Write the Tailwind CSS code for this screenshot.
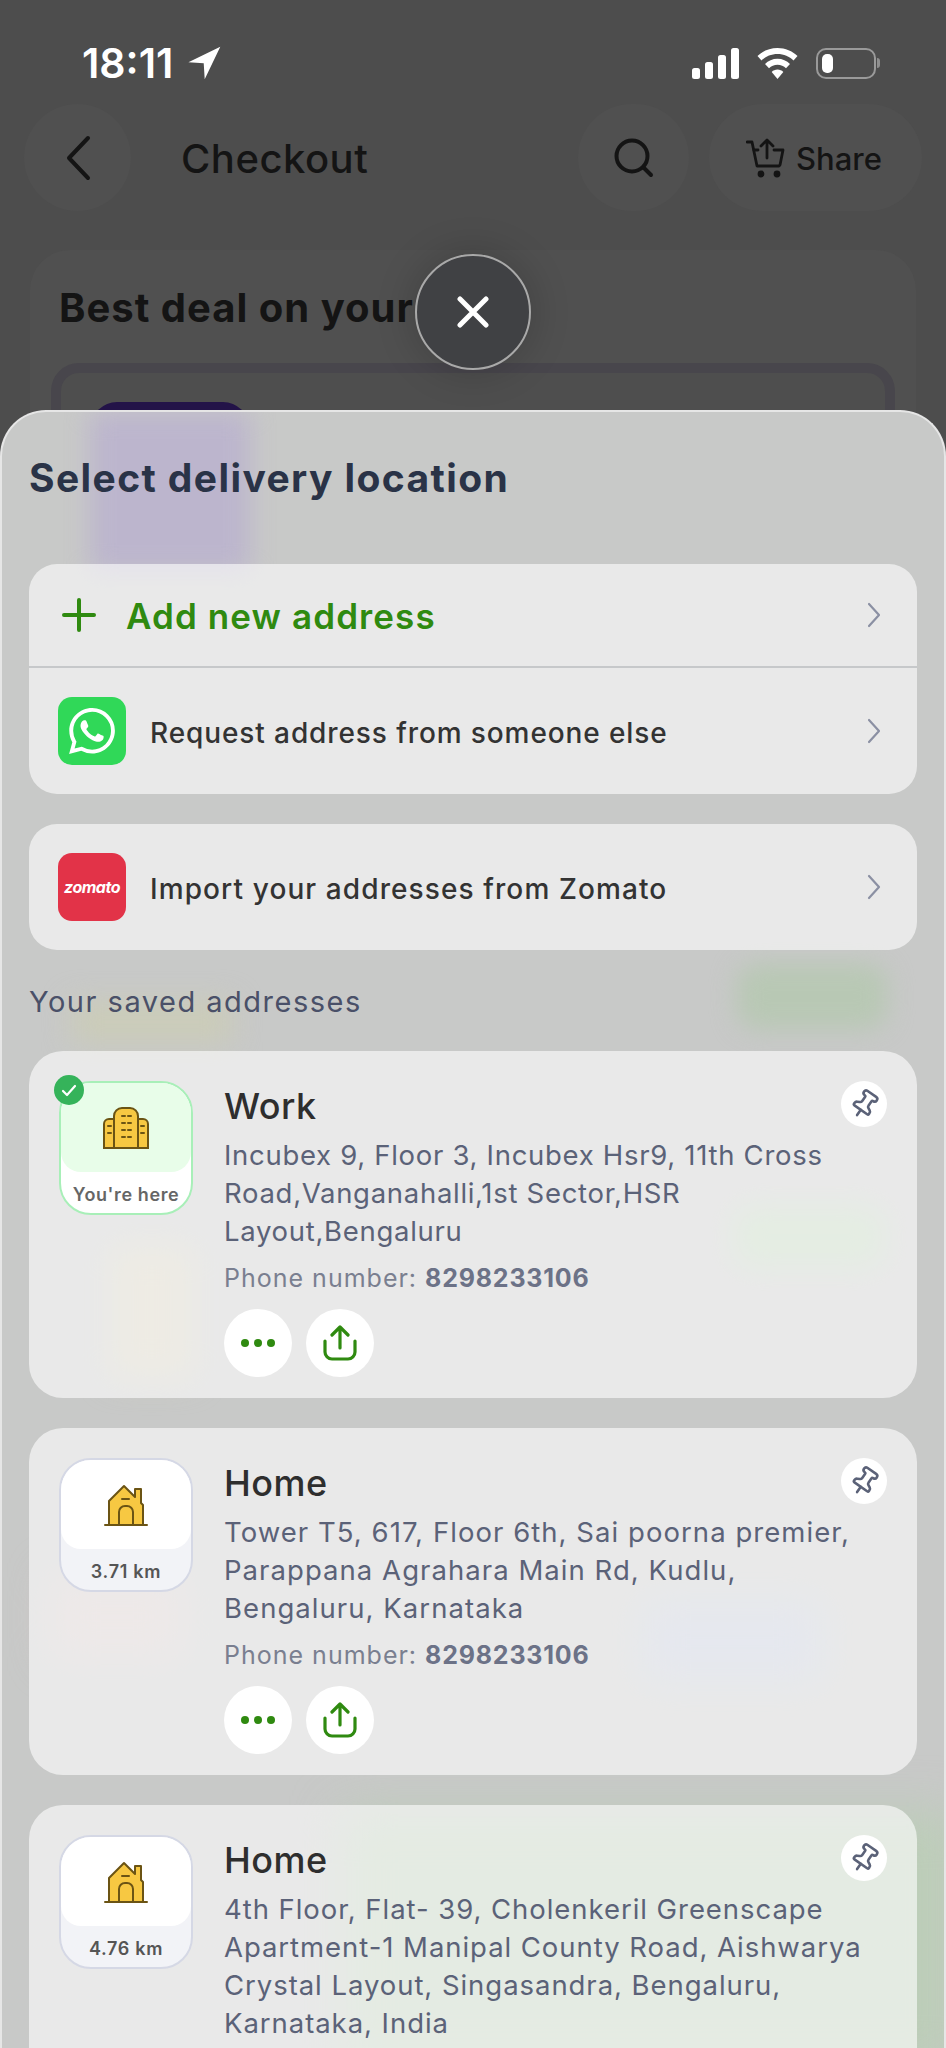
<!DOCTYPE html>
<html lang="en">
<head>
    <meta charset="UTF-8">
    <meta name="viewport" content="width=device-width, initial-scale=1.0">
    <title>Select delivery location</title>
    <script src="https://cdn.jsdelivr.net/npm/@tailwindcss/browser@4"></script>
</head>
<body class="bg-[#4d4d4d] font-['Inter',sans-serif]">
<div class="relative w-[946px] h-[2048px] overflow-hidden bg-[#4d4d4d]">

    <!-- status bar -->
    <div class="h-[104px] pl-[82px] pr-[66px] pt-[41px] flex items-start justify-between text-white">
        <div class="flex items-center gap-[14px] h-[44px]">
            <span class="text-[41px] leading-[44px] font-semibold tracking-[0px]">18:11</span>
            <svg class="w-[34px] h-[34px]" viewBox="0 0 24 24" fill="#fff"><path d="M23.500.5 1 11.500l10.800.7.7 11.300z"/></svg>
        </div>
        <div class="flex items-center gap-[18px] h-[44px]">
            <svg class="w-[47px] h-[31px]" viewBox="0 0 47 31" fill="#fff"><rect x="0" y="20" width="8" height="11" rx="2.5"/><rect x="13" y="14" width="8" height="17" rx="2.5"/><rect x="26" y="7" width="8" height="24" rx="2.5"/><rect x="39" y="0" width="8" height="31" rx="2.5"/></svg>
            <svg class="w-[41px] h-[31px]" viewBox="0 0 41 31" fill="#fff"><path d="M20.5 0C12.6 0 5.6 3.1.5 8.1l4 4.3c4-4 9.700-6.500 16-6.500s12 2.500 16 6.500l4-4.300C35.400 3.100 28.400 0 20.500 0z"/><path d="M20.500 10.800c-4.900 0-9.300 2-12.500 5.100l4 4.300c2.200-2.100 5.200-3.500 8.500-3.500s6.300 1.400 8.500 3.500l4-4.300c-3.200-3.100-7.600-5.100-12.500-5.100z"/><path d="M20.500 21.600c-2.300 0-4.300.9-5.800 2.300l5.800 7.100 5.800-7.100c-1.500-1.400-3.500-2.300-5.800-2.300z"/></svg>
            <div class="flex items-center gap-[1px]">
                <div class="w-[60px] h-[31px] rounded-[10px] border-2 border-[#9a9a9a] p-[4px]">
                    <div class="w-[11px] h-full rounded-[5px] bg-white"></div>
                </div>
                <div class="w-[3px] h-[10px] rounded-r-full bg-[#8f8f8f]"></div>
            </div>
        </div>
    </div>

    <!-- page header behind the sheet -->
    <div class="h-[107px] pl-[24px] pr-[24px] flex items-center">
        <div class="w-[107px] h-[107px] rounded-full bg-[#505050] flex items-center justify-center">
            <svg class="w-[28px] h-[48px]" viewBox="0 0 28 48" fill="none" stroke="#141414" stroke-width="4" stroke-linecap="round" stroke-linejoin="round"><path d="M24 4 5 24l19 20"/></svg>
        </div>
        <h1 class="ml-[50px] flex-1 pt-[3px] text-[40px] tracking-[0.5px] font-medium text-[#141414]">Checkout</h1>
        <div class="w-[111px] h-[107px] rounded-full bg-[#505050] flex items-center justify-center">
            <svg class="w-[40px] h-[40px]" viewBox="0 0 40 40" fill="none" stroke="#141414" stroke-width="4" stroke-linecap="round"><circle cx="18" cy="18" r="15.500"/><path d="m30 30 7 7"/></svg>
        </div>
        <div class="ml-[20px] w-[213px] h-[107px] rounded-full bg-[#505050] flex items-center pl-[37px] gap-[10px]">
            <svg class="w-[40px] h-[40px]" viewBox="0 0 40 40" fill="none" stroke="#141414" stroke-width="2.800" stroke-linecap="round" stroke-linejoin="round"><path d="M1 4h5l5 24h22"/><path d="M8 12h4M28 12h9l-3 15"/><path d="M21 20V3M15 8l6-6 6 6"/><circle cx="15" cy="36" r="2" fill="#141414"/><circle cx="31" cy="36" r="2" fill="#141414"/></svg>
            <span class="pt-[3px] text-[31px] font-medium text-[#141414]">Share</span>
        </div>
    </div>

    <!-- best deal card, mostly covered -->
    <div class="mt-[39px] mx-[30px] h-[400px] rounded-[40px] bg-[#505050] pt-[34px] px-[29px]">
        <p class="text-[40px] leading-[48px] tracking-[1px] font-bold text-[#141414]">Best deal on your</p>
        <div class="mt-[31px] h-[300px] rounded-[28px] border-[10px] border-[#48464c] bg-[#4e4e4e] -mx-[8px] pt-[29px] pl-[30px]">
            <div class="w-[158px] h-[170px] rounded-[26px] bg-[#231348]"></div>
        </div>
    </div>

    <!-- bottom sheet -->
    <div class="absolute inset-x-0 top-[410px] bottom-0 overflow-hidden rounded-t-[46px] bg-[#c8c9c8] border-t-2 border-x-2 border-[#e6e6e6]">

        <!-- blurred page showing through -->
        <div class="absolute left-[88px] top-[0px] w-[160px] h-[160px] bg-[#bcb5cd] blur-[12px]"></div>
        <div class="absolute left-[735px] top-[552px] w-[150px] h-[65px] rounded-[20px] bg-[#b8c8b4] blur-[12px]"></div>
        <div class="absolute left-[732px] top-[795px] w-[150px] h-[60px] rounded-[20px] bg-[#bcd2b8] blur-[14px]"></div>
        <div class="absolute left-[110px] top-[835px] w-[80px] h-[130px] bg-[#d4cebb] blur-[16px]"></div>
        <div class="absolute left-[70px] top-[590px] w-[160px] h-[40px] bg-[#cbccb8] blur-[14px]"></div>
        <div class="absolute left-[50px] top-[1165px] w-[130px] h-[80px] bg-[#d4c8c6] blur-[20px]"></div>
        <div class="absolute left-[640px] top-[1190px] w-[180px] h-[80px] bg-[#bfc5d6] blur-[20px]"></div>
        <div class="absolute left-[340px] top-[1400px] w-[620px] h-[260px] bg-[#bccdb8] blur-[24px]"></div>

        <div class="relative px-[27px]">
            <h2 class="h-[152px] pt-[42px] text-[39px] leading-[48px] tracking-[1.4px] font-bold text-[#2a3347]">Select delivery location</h2>

            <div class="rounded-[28px] bg-white/60 overflow-hidden">
                <div class="h-[102px] flex items-center pl-[33px] pr-[36px]">
                    <svg class="w-[34px] h-[34px]" viewBox="0 0 34 34" fill="none" stroke="#2f8a10" stroke-width="4" stroke-linecap="round"><path d="M17 2v30M2 17h30"/></svg>
                    <span class="ml-[30px] flex-1 pt-[3px] text-[35px] tracking-[1.1px] font-semibold text-[#2f8a10]">Add new address</span>
                    <svg class="w-[14px] h-[26px]" viewBox="0 0 14 26" fill="none" stroke="#8b90a3" stroke-width="2.200" stroke-linecap="round" stroke-linejoin="round"><path d="m2 2 10 11L2 24"/></svg>
                </div>
                <div class="h-[2px] bg-[#c6c8ca]"></div>
                <div class="h-[126px] flex items-center pl-[29px] pr-[36px]">
                    <div class="w-[68px] h-[68px] rounded-[14px] bg-[#30d858] flex items-center justify-center">
                        <svg class="w-[46px] h-[46px]" viewBox="0 0 24 24" fill="#fff"><path d="M17.472 14.382c-.297-.149-1.758-.867-2.03-.967-.273-.099-.471-.148-.67.15-.197.297-.767.966-.94 1.164-.173.199-.347.223-.644.075-.297-.15-1.255-.463-2.39-1.475-.883-.788-1.48-1.761-1.653-2.059-.173-.297-.018-.458.13-.606.134-.133.298-.347.446-.52.149-.174.198-.298.298-.497.099-.198.05-.371-.025-.52-.075-.149-.669-1.612-.916-2.207-.242-.579-.487-.5-.669-.51-.173-.008-.371-.01-.57-.01-.198 0-.52.074-.792.372-.272.297-1.04 1.016-1.04 2.479 0 1.462 1.065 2.875 1.213 3.074.149.198 2.096 3.2 5.077 4.487.709.306 1.262.489 1.694.625.712.227 1.36.195 1.871.118.571-.085 1.758-.719 2.006-1.413.248-.694.248-1.289.173-1.413-.074-.124-.272-.198-.57-.347m-5.421 7.403h-.004a9.87 9.87 0 01-5.031-1.378l-.361-.214-3.741.982.998-3.648-.235-.374a9.86 9.86 0 01-1.51-5.26c.001-5.45 4.436-9.884 9.888-9.884 2.64 0 5.122 1.03 6.988 2.898a9.825 9.825 0 012.893 6.994c-.003 5.45-4.437 9.884-9.885 9.884m8.413-18.297A11.815 11.815 0 0012.05 0C5.495 0 .16 5.335.157 11.892c0 2.096.547 4.142 1.588 5.945L.057 24l6.305-1.654a11.882 11.882 0 005.683 1.448h.005c6.554 0 11.89-5.335 11.893-11.893a11.821 11.821 0 00-3.48-8.413z"/></svg>
                    </div>
                    <span class="ml-[24px] flex-1 pt-[3px] text-[28px] tracking-[0.9px] font-medium text-[#333333]">Request address from someone else</span>
                    <svg class="w-[14px] h-[26px]" viewBox="0 0 14 26" fill="none" stroke="#8b90a3" stroke-width="2.200" stroke-linecap="round" stroke-linejoin="round"><path d="m2 2 10 11L2 24"/></svg>
                </div>
            </div>

            <div class="mt-[30px] h-[126px] rounded-[28px] bg-white/60 flex items-center pl-[29px] pr-[36px]">
                <div class="w-[68px] h-[68px] rounded-[14px] bg-[#e23348] flex items-center justify-center">
                    <span class="text-[16px] font-bold italic tracking-[-0.5px] text-white">zomato</span>
                </div>
                <span class="ml-[24px] flex-1 pt-[3px] text-[28px] tracking-[1.1px] font-medium text-[#333333]">Import your addresses from Zomato</span>
                <svg class="w-[14px] h-[26px]" viewBox="0 0 14 26" fill="none" stroke="#8b90a3" stroke-width="2.200" stroke-linecap="round" stroke-linejoin="round"><path d="m2 2 10 11L2 24"/></svg>
            </div>

            <p class="h-[101px] pt-[33px] text-[29px] leading-[38px] tracking-[1.500px] text-[#4a5068]">Your saved addresses</p>

            <!-- Work -->
            <div class="relative rounded-[34px] bg-white/60 h-[347px] flex pt-[30px] pl-[30px] pr-[30px]">
                <div class="relative w-[134px] h-[134px] shrink-0 rounded-[32px] border-2 border-[#a8efb8] bg-white">
                    <div class="h-[89px] rounded-t-[30px] rounded-b-[20px] bg-[#e8fde9] flex items-center justify-center">
                        <svg class="w-[46px] h-[42px]" viewBox="0 0 46 42" fill="#f7c842" stroke="#6b5414" stroke-width="2"><path d="M1 41V17a5 5 0 0 1 5-5h7v29z"/><path d="M45 41V17a5 5 0 0 0-5-5h-7v29z"/><path d="M11 41V9a8 8 0 0 1 8-8h8a8 8 0 0 1 8 8v32z"/><path d="M19 9h3M25 9h3M19 16h3M25 16h3M19 23h3M25 23h3M19 30h3M25 30h3M5 19h3M5 26h3M38 19h3M38 26h3" stroke-linecap="round"/></svg>
                    </div>
                    <p class="pt-[3px] text-center text-[18px] leading-[40px] tracking-[0.6px] font-semibold text-[#666666] whitespace-nowrap">You're here</p>
                    <div class="absolute -left-[7px] -top-[8px] w-[30px] h-[30px] rounded-full bg-[#35b35a] flex items-center justify-center">
                        <svg class="w-[16px] h-[16px]" viewBox="0 0 16 16" fill="none" stroke="#fff" stroke-width="2.200" stroke-linecap="round" stroke-linejoin="round"><path d="m2 9 4 4 8-9"/></svg>
                    </div>
                </div>
                <div class="ml-[31px] flex-1">
                    <h3 class="text-[36px] leading-[50px] tracking-[0.5px] font-medium text-[#2e2e2e]">Work</h3>
                    <p class="mt-[5px] text-[27.500px] leading-[38px] tracking-[0.7px] text-[#5b6278]">Incubex 9, Floor 3, Incubex Hsr9, 11th Cross<br>Road,Vanganahalli,1st Sector,HSR<br>Layout,Bengaluru</p>
                    <p class="mt-[9px] text-[25px] leading-[38px] tracking-[1px] text-[#7a7f90]">Phone number: <span class="font-bold tracking-[0.8px] text-[#6c7287]">8298233106</span></p>
                    <div class="mt-[12px] flex gap-[14px]">
                        <div class="w-[68px] h-[68px] rounded-full bg-white flex items-center justify-center">
                            <svg class="w-[34px] h-[8px]" viewBox="0 0 34 8" fill="#2f8a10"><circle cx="4" cy="4" r="4"/><circle cx="17" cy="4" r="4"/><circle cx="30" cy="4" r="4"/></svg>
                        </div>
                        <div class="w-[68px] h-[68px] rounded-full bg-white flex items-center justify-center">
                            <svg class="w-[34px] h-[36px]" viewBox="0 0 34 36" fill="none" stroke="#2f8a10" stroke-width="3.200" stroke-linecap="round" stroke-linejoin="round"><path d="M17 23V3M9 10l8-8 8 8"/><path d="M2 16v11a7 7 0 0 0 7 7h16a7 7 0 0 0 7-7V16"/></svg>
                        </div>
                    </div>
                </div>
                <div class="absolute right-[30px] top-[30px] w-[46px] h-[46px] rounded-full bg-white flex items-center justify-center">
                    <svg class="w-[31px] h-[31px] rotate-[35deg]" viewBox="0 0 24 24" fill="none" stroke="#5b6278" stroke-width="2" stroke-linecap="round" stroke-linejoin="round"><path d="M12 17v5"/><path d="M9 10.760a2 2 0 0 1-1.110 1.790l-1.780.9A2 2 0 0 0 5 15.240V16a1 1 0 0 0 1 1h12a1 1 0 0 0 1-1v-.76a2 2 0 0 0-1.110-1.790l-1.780-.9A2 2 0 0 1 15 10.760V7a1 1 0 0 1 1-1 2 2 0 0 0 0-4H8a2 2 0 0 0 0 4 1 1 0 0 1 1 1z"/></svg>
                </div>
            </div>

            <!-- Home 3.71 -->
            <div class="relative mt-[30px] rounded-[34px] bg-white/60 h-[347px] flex pt-[30px] pl-[30px] pr-[30px]">
                <div class="w-[134px] h-[134px] shrink-0 rounded-[32px] border-2 border-[#d5d8e5] bg-[#f2f3f7]">
                    <div class="h-[89px] rounded-t-[30px] rounded-b-[20px] bg-white flex items-center justify-center">
                        <svg class="w-[44px] h-[42px]" viewBox="0 0 44 42" fill="#f7c842" stroke="#6b5414" stroke-width="2" stroke-linejoin="round"><path d="M5 41V17L20 2l11 11V5h6v14l2 2v20z"/><path d="M1 41h42" stroke-linecap="round"/><path d="M15 41V28a6 6 0 0 1 6-6h2a6 6 0 0 1 6 6v13z" fill="none"/><path d="M18 15h7" stroke-linecap="round"/></svg>
                    </div>
                    <p class="pt-[3px] text-center text-[18px] leading-[40px] tracking-[0.7px] font-semibold text-[#555555]">3.71 km</p>
                </div>
                <div class="ml-[31px] flex-1">
                    <h3 class="text-[36px] leading-[50px] tracking-[0.5px] font-medium text-[#2e2e2e]">Home</h3>
                    <p class="mt-[5px] text-[27.500px] leading-[38px] tracking-[1.05px] text-[#5b6278]">Tower T5, 617, Floor 6th, Sai poorna premier,<br>Parappana Agrahara Main Rd, Kudlu,<br>Bengaluru, Karnataka</p>
                    <p class="mt-[9px] text-[25px] leading-[38px] tracking-[1px] text-[#7a7f90]">Phone number: <span class="font-bold tracking-[0.8px] text-[#6c7287]">8298233106</span></p>
                    <div class="mt-[12px] flex gap-[14px]">
                        <div class="w-[68px] h-[68px] rounded-full bg-white flex items-center justify-center">
                            <svg class="w-[34px] h-[8px]" viewBox="0 0 34 8" fill="#2f8a10"><circle cx="4" cy="4" r="4"/><circle cx="17" cy="4" r="4"/><circle cx="30" cy="4" r="4"/></svg>
                        </div>
                        <div class="w-[68px] h-[68px] rounded-full bg-white flex items-center justify-center">
                            <svg class="w-[34px] h-[36px]" viewBox="0 0 34 36" fill="none" stroke="#2f8a10" stroke-width="3.200" stroke-linecap="round" stroke-linejoin="round"><path d="M17 23V3M9 10l8-8 8 8"/><path d="M2 16v11a7 7 0 0 0 7 7h16a7 7 0 0 0 7-7V16"/></svg>
                        </div>
                    </div>
                </div>
                <div class="absolute right-[30px] top-[30px] w-[46px] h-[46px] rounded-full bg-white flex items-center justify-center">
                    <svg class="w-[31px] h-[31px] rotate-[35deg]" viewBox="0 0 24 24" fill="none" stroke="#5b6278" stroke-width="2" stroke-linecap="round" stroke-linejoin="round"><path d="M12 17v5"/><path d="M9 10.760a2 2 0 0 1-1.110 1.790l-1.780.9A2 2 0 0 0 5 15.240V16a1 1 0 0 0 1 1h12a1 1 0 0 0 1-1v-.76a2 2 0 0 0-1.110-1.790l-1.780-.9A2 2 0 0 1 15 10.760V7a1 1 0 0 1 1-1 2 2 0 0 0 0-4H8a2 2 0 0 0 0 4 1 1 0 0 1 1 1z"/></svg>
                </div>
            </div>

            <!-- Home 4.76 -->
            <div class="relative mt-[30px] rounded-[34px] bg-white/60 h-[385px] flex pt-[30px] pl-[30px] pr-[30px]">
                <div class="w-[134px] h-[134px] shrink-0 rounded-[32px] border-2 border-[#d5d8e5] bg-[#f2f3f7]">
                    <div class="h-[89px] rounded-t-[30px] rounded-b-[20px] bg-white flex items-center justify-center">
                        <svg class="w-[44px] h-[42px]" viewBox="0 0 44 42" fill="#f7c842" stroke="#6b5414" stroke-width="2" stroke-linejoin="round"><path d="M5 41V17L20 2l11 11V5h6v14l2 2v20z"/><path d="M1 41h42" stroke-linecap="round"/><path d="M15 41V28a6 6 0 0 1 6-6h2a6 6 0 0 1 6 6v13z" fill="none"/><path d="M18 15h7" stroke-linecap="round"/></svg>
                    </div>
                    <p class="pt-[3px] text-center text-[18px] leading-[40px] tracking-[0.7px] font-semibold text-[#555555]">4.76 km</p>
                </div>
                <div class="ml-[31px] flex-1">
                    <h3 class="text-[36px] leading-[50px] tracking-[0.5px] font-medium text-[#2e2e2e]">Home</h3>
                    <p class="mt-[5px] text-[27.500px] leading-[38px] tracking-[0.95px] text-[#5b6278]">4th Floor, Flat- 39, Cholenkeril Greenscape<br>Apartment-1 Manipal County Road, Aishwarya<br>Crystal Layout, Singasandra, Bengaluru,<br>Karnataka, India</p>
                </div>
                <div class="absolute right-[30px] top-[30px] w-[46px] h-[46px] rounded-full bg-white flex items-center justify-center">
                    <svg class="w-[31px] h-[31px] rotate-[35deg]" viewBox="0 0 24 24" fill="none" stroke="#5b6278" stroke-width="2" stroke-linecap="round" stroke-linejoin="round"><path d="M12 17v5"/><path d="M9 10.760a2 2 0 0 1-1.110 1.790l-1.780.9A2 2 0 0 0 5 15.240V16a1 1 0 0 0 1 1h12a1 1 0 0 0 1-1v-.76a2 2 0 0 0-1.110-1.790l-1.780-.9A2 2 0 0 1 15 10.760V7a1 1 0 0 1 1-1 2 2 0 0 0 0-4H8a2 2 0 0 0 0 4 1 1 0 0 1 1 1z"/></svg>
                </div>
            </div>
        </div>
    </div>

    <!-- close button -->
    <div class="absolute left-[415px] top-[254px] w-[116px] h-[116px] rounded-full bg-[#404144] border-2 border-[#a9a9a9] shadow-[0_0_40px_rgba(0,0,0,0.2)] flex items-center justify-center">
        <svg class="w-[32px] h-[32px]" viewBox="0 0 32 32" fill="none" stroke="#fff" stroke-width="5" stroke-linecap="round"><path d="m3 3 26 26M29 3 3 29"/></svg>
    </div>
</div>
</body>
</html>
